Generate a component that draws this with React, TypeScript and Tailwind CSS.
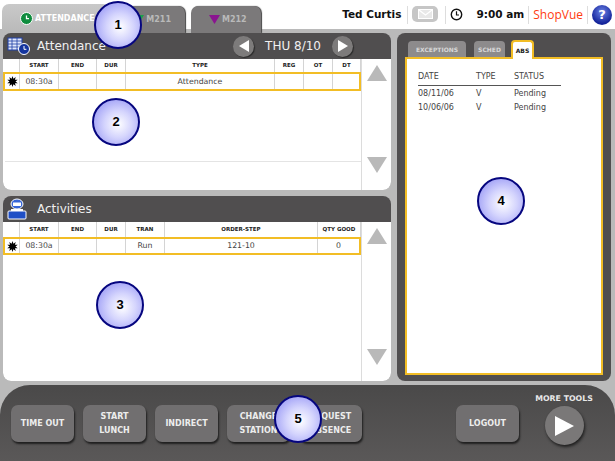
import React from "react";

const font = { fontFamily: '"DejaVu Sans", sans-serif' };

function Burst() {
  const pts: string[] = [];
  for (let i = 0; i < 20; i++) {
    const a = (i * Math.PI) / 10;
    const r = i % 2 ? 3 : 5.5;
    pts.push(`${5.5 + r * Math.sin(a)},${5.5 - r * Math.cos(a)}`);
  }
  return (
    <svg width="11" height="11" viewBox="0 0 11 11">
      <polygon points={pts.join(" ")} fill="#000" />
    </svg>
  );
}

function Badge({ n, className }: { n: number; className: string }) {
  return (
    <div
      className={`absolute w-[48px] h-[48px] rounded-full border-2 border-[#06067f] flex items-center justify-center text-[13px] font-bold text-black bg-[radial-gradient(circle_at_55%_55%,#ffffff_0%,#d4d4fd_40%,#8585f2_100%)] ${className}`}
      style={{ fontFamily: '"Liberation Sans", sans-serif' }}
    >
      {n}
    </div>
  );
}

function Arrow({ up }: { up?: boolean }) {
  return (
    <svg width="20" height="16" viewBox="0 0 20 16">
      <polygon points={up ? "10,0 20,16 0,16" : "0,0 20,0 10,16"} fill="#b9b9b9" />
    </svg>
  );
}

function RoundNav({ left }: { left?: boolean }) {
  return (
    <div className="w-[21px] h-[21px] rounded-full bg-[#7d7b7b] flex items-center justify-center shadow-[1px_1px_1px_#2b2b2b]">
      <svg width="12" height="12" viewBox="0 0 12 12">
        <polygon points={left ? "11,0 11,12 1,6" : "1,0 1,12 11,6"} fill="#fff" />
      </svg>
    </div>
  );
}

function Table({
  cols,
  row,
  height,
  headH,
  rowH,
  pb,
  divider,
}: {
  cols: [string, number][];
  row: string[];
  height: string;
  headH: string;
  rowH: string;
  pb: string;
  divider?: boolean;
}) {
  return (
    <div className={`flex bg-white rounded-b-[8px] overflow-hidden ${height}`}>
      <div className="w-[358px] flex flex-col shrink-0">
        <div className={`flex ${headH}`}>
          {cols.map(([c, w], i) => (
            <div
              key={i}
              style={{ width: w }}
              className="flex items-center justify-center text-[5.5px] font-bold text-[#222] border-r border-[#d4d4d4] shrink-0 whitespace-nowrap"
            >
              {c}
            </div>
          ))}
        </div>
        <div className={`flex ${rowH} border-2 border-[#f2bd25] w-[358px] box-border`}>
          {row.map((c, i) => {
            const w = i === 0 || i === row.length - 1 ? cols[i][1] - 2 : cols[i][1];
            return (
              <div
                key={i}
                style={{ width: w }}
                className="text-[7.8px] text-[#444] border-r border-[#d4d4d4] shrink-0 flex items-center justify-center last:border-r-0"
              >
                {i === 0 ? <Burst /> : c}
              </div>
            );
          })}
        </div>
        {divider && <div className="mt-[70px] ml-[2px] border-b border-[#e4e4e4]" />}
      </div>
      <div className={`w-[30px] border-l border-[#dcdcdc] flex flex-col items-center justify-between pt-[6px] ${pb}`}>
        <Arrow up />
        <Arrow />
      </div>
    </div>
  );
}

function ActionButton({ label }: { label: React.ReactNode }) {
  return (
    <div className="w-[63px] h-[37px] shrink-0 rounded-[7px] bg-[#716f70] flex items-center justify-center text-center text-[8px] leading-[14px] font-bold text-[#ededed] shadow-[1px_2px_2px_#1f1f1f]">
      {label}
    </div>
  );
}

export default function App() {
  return (
    <div className="relative w-[615px] h-[461px] overflow-hidden bg-[#bababa] flex flex-col" style={font}>
      {/* top bar */}
      <div className="h-[33px] flex items-end justify-between shrink-0 bg-[linear-gradient(#ffffff_0,#ffffff_29px,#bababa_29px)]">
        <div className="flex items-end h-full pl-[2px]">
          <div className="w-[108px] h-[29px] rounded-t-[7px] bg-[linear-gradient(#c9c9c9,#b9b9b9)] flex items-center pl-[18px] gap-[2px] text-[8px] font-bold text-white">
            <span className="w-[13px] h-[13px] rounded-full bg-[#0f8c3e] flex items-center justify-center border border-white shrink-0">
              <svg width="9" height="9" viewBox="0 0 9 9">
                <path d="M4.5 1.5V4.7H7" stroke="#fff" strokeWidth="1.3" fill="none" />
              </svg>
            </span>
            ATTENDANCE
          </div>
          <div className="w-[76px] h-[27px] -ml-[1px] rounded-t-[7px] bg-[#7b797a] flex items-center justify-end pr-[14px] gap-[2px] text-[8px] font-bold text-[#b9b9b9] shadow-[1px_0_1px_#444]">
            <svg width="11" height="9" viewBox="0 0 11 9">
              <polygon points="0,0 11,0 5.5,9" fill="#19a04a" />
            </svg>
            M211
          </div>
          <div className="w-[70px] h-[27px] ml-[6px] rounded-t-[7px] bg-[#7b797a] flex items-center pl-[18px] gap-[2px] text-[8px] font-bold text-[#b9b9b9] shadow-[1px_0_1px_#444]">
            <svg width="11" height="9" viewBox="0 0 11 9">
              <polygon points="0,0 11,0 5.5,9" fill="#8a1490" />
            </svg>
            M212
          </div>
        </div>
        <div className="h-full flex items-center pr-[3px] pb-[4px]">
          <span className="text-[10.5px] font-bold text-[#111] mr-[6px]">Ted Curtis</span>
          <div className="h-[18px] border-l border-[#ddd] pl-[4px] mr-[7px]">
            <div className="w-[26px] h-[16px] rounded-[5px] bg-[#c6c6c6] flex items-center justify-center">
              <svg width="15" height="10" viewBox="0 0 15 10">
                <rect x="0.5" y="0.5" width="14" height="9" fill="#e8e8e8" stroke="#fff" />
                <path d="M1 1l6.5 5L14 1" stroke="#fff" fill="none" strokeWidth="1.3" />
              </svg>
            </div>
          </div>
          <div className="h-[18px] border-l border-[#ddd] pl-[4px] flex items-center mr-[13px]">
            <svg width="13" height="13" viewBox="0 0 13 13">
              <circle cx="6.5" cy="6.5" r="5.2" fill="none" stroke="#111" strokeWidth="1.4" />
              <path d="M6.5 3.2V7H9" fill="none" stroke="#111" strokeWidth="1.2" />
            </svg>
          </div>
          <span className="text-[10.5px] font-bold text-[#111] mr-[4px]">9:00 am</span>
          <span className="h-[18px] border-l border-[#ddd] pl-[4px] text-[12px] leading-[18px] text-[#ff3b10] mr-[4px]" style={{ fontFamily: '"Open Sans", sans-serif', fontWeight: 500 }}>
            ShopVue
          </span>
          <div className="h-[18px] border-l border-[#ddd] pl-[4px] flex items-center">
            <div className="w-[20px] h-[20px] rounded-full bg-[radial-gradient(circle_at_50%_35%,#6b83e6,#14249a_70%)] flex items-center justify-center text-[13px] font-bold text-white leading-none">
              ?
            </div>
          </div>
        </div>
      </div>

      {/* main */}
      <div className="flex flex-1 pl-[3px] pr-[4px] gap-[6px] min-h-0">
        <div className="w-[388px] flex flex-col gap-[6px]">
          <section className="rounded-[8px] overflow-hidden">
            <div className="h-[26px] bg-[#504e4f] flex items-center text-white">
              <div className="w-[34px] pl-[4px] shrink-0">
                <svg width="24" height="20" viewBox="0 0 24 20">
                  <rect x="1" y="2" width="14" height="12" fill="#dfe6fb" stroke="#1f3fa6" />
                  <path d="M1 5h14M1 8h14M1 11h14M5 2v12M10 2v12" stroke="#1f3fa6" strokeWidth="0.8" />
                  <circle cx="17" cy="13" r="5.5" fill="#14349e" stroke="#fff" />
                  <path d="M17 10v3.3h2.4" stroke="#fff" fill="none" />
                </svg>
              </div>
              <span className="text-[12px] text-[#f0f0f0]">Attendance</span>
              <div className="ml-auto mr-[38px] flex items-center gap-[10px]">
                <RoundNav left />
                <span className="text-[12px] text-[#f0f0f0] w-[58px] text-center whitespace-nowrap">THU 8/10</span>
                <RoundNav />
              </div>
            </div>
            <Table
              height="h-[131px]"
              headH="h-[13px]"
              rowH="h-[19px]"
              pb="pb-[17px]"
              divider
              cols={[
                ["", 17],
                ["START", 39],
                ["END", 38],
                ["DUR", 29],
                ["TYPE", 149],
                ["REG", 29],
                ["OT", 29],
                ["DT", 28],
              ]}
              row={["", "08:30a", "", "", "Attendance", "", "", ""]}
            />
          </section>
          <section className="rounded-[8px] overflow-hidden">
            <div className="h-[26px] bg-[#504e4f] flex items-center text-white">
              <div className="w-[34px] pl-[4px] shrink-0">
                <svg width="20" height="22" viewBox="0 0 20 22">
                  <ellipse cx="10" cy="6" rx="6" ry="5" fill="#3766d8" stroke="#fff" />
                  <rect x="6" y="4.5" width="8" height="3.5" fill="#fff" />
                  <rect x="4" y="11" width="12" height="3" fill="#fff" />
                  <rect x="1" y="13" width="18" height="8" rx="1" fill="#1f4fc6" stroke="#fff" />
                </svg>
              </div>
              <span className="text-[12px] text-[#f0f0f0]">Activities</span>
            </div>
            <Table
              height="h-[159px]"
              headH="h-[15px]"
              rowH="h-[18px]"
              pb="pb-[16px]"
              cols={[
                ["", 17],
                ["START", 39],
                ["END", 38],
                ["DUR", 29],
                ["TRAN", 39],
                ["ORDER-STEP", 153],
                ["QTY GOOD", 43],
              ]}
              row={["", "08:30a", "", "", "Run", "121-10", "0"]}
            />
          </section>
        </div>

        {/* right panel */}
        <aside className="flex-1 h-[348px] rounded-[8px] bg-[#504e4f] px-[8px] pt-[7px] pb-[6px] flex flex-col">
          <div className="relative z-10 flex items-end gap-[8px] pl-[3px] h-[19px] -mb-[2px] shrink-0">
            <div className="w-[58px] h-[16px] mb-[2px] rounded-t-[4px] bg-[#8d8b8c] text-[6px] font-bold text-[#d8d8d8] flex items-center justify-center">EXCEPTIONS</div>
            <div className="w-[31px] h-[16px] mb-[2px] rounded-t-[4px] bg-[#8d8b8c] text-[6px] font-bold text-[#d8d8d8] flex items-center justify-center">SCHED</div>
            <div className="w-[23px] h-[19px] -ml-[2px] rounded-t-[4px] bg-white border-2 border-b-0 border-[#f2bd25] text-[6px] font-bold text-[#222] flex items-center justify-center">ABS</div>
          </div>
          <div className="flex-1 bg-white border-2 border-[#f2bd25] pt-[11px] pl-[11px] text-[8px] text-[#444]">
            <div className="w-[143px] flex h-[16px] items-center border-b border-[#555] pb-[1px]">
              <span className="w-[58px]">DATE</span>
              <span className="w-[38px]">TYPE</span>
              <span>STATUS</span>
            </div>
            <div className="flex h-[14px] items-center mt-px">
              <span className="w-[58px]">08/11/06</span>
              <span className="w-[38px]">V</span>
              <span>Pending</span>
            </div>
            <div className="flex h-[14px] items-center">
              <span className="w-[58px]">10/06/06</span>
              <span className="w-[38px]">V</span>
              <span>Pending</span>
            </div>
          </div>
        </aside>
      </div>

      {/* bottom */}
      <footer className="h-[76px] shrink-0 rounded-t-[30px] bg-[linear-gradient(#4a4949,#5a5858)] flex pl-[11px] pt-[20px] gap-[9px]">
        <ActionButton label="TIME OUT" />
        <ActionButton label={<>START<br />LUNCH</>} />
        <ActionButton label="INDIRECT" />
        <ActionButton label={<>CHANGE<br />STATION</>} />
        <ActionButton label={<>REQUEST<br />ABSENCE</>} />
        <div className="ml-[85px] shrink-0">
          <ActionButton label="LOGOUT" />
        </div>
        <div className="ml-[6px] -mt-[13px] flex flex-col items-center w-[60px] shrink-0">
          <span className="text-[7.8px] leading-[14px] font-bold text-[#e8e8e8] whitespace-nowrap">MORE TOOLS</span>
          <div className="w-[39px] h-[39px] rounded-full bg-[#7a7878] flex items-center justify-center shadow-[1px_2px_3px_#1f1f1f]">
            <svg width="22" height="22" viewBox="0 0 22 22">
              <polygon points="2,1 2,21 21,11" fill="#fff" />
            </svg>
          </div>
        </div>
      </footer>

      <Badge n={1} className="left-[94px] top-[1px]" />
      <Badge n={2} className="left-[92px] top-[98px]" />
      <Badge n={3} className="left-[96px] top-[281px]" />
      <Badge n={4} className="left-[477px] top-[177px]" />
      <Badge n={5} className="left-[274px] top-[395px]" />
    </div>
  );
}
